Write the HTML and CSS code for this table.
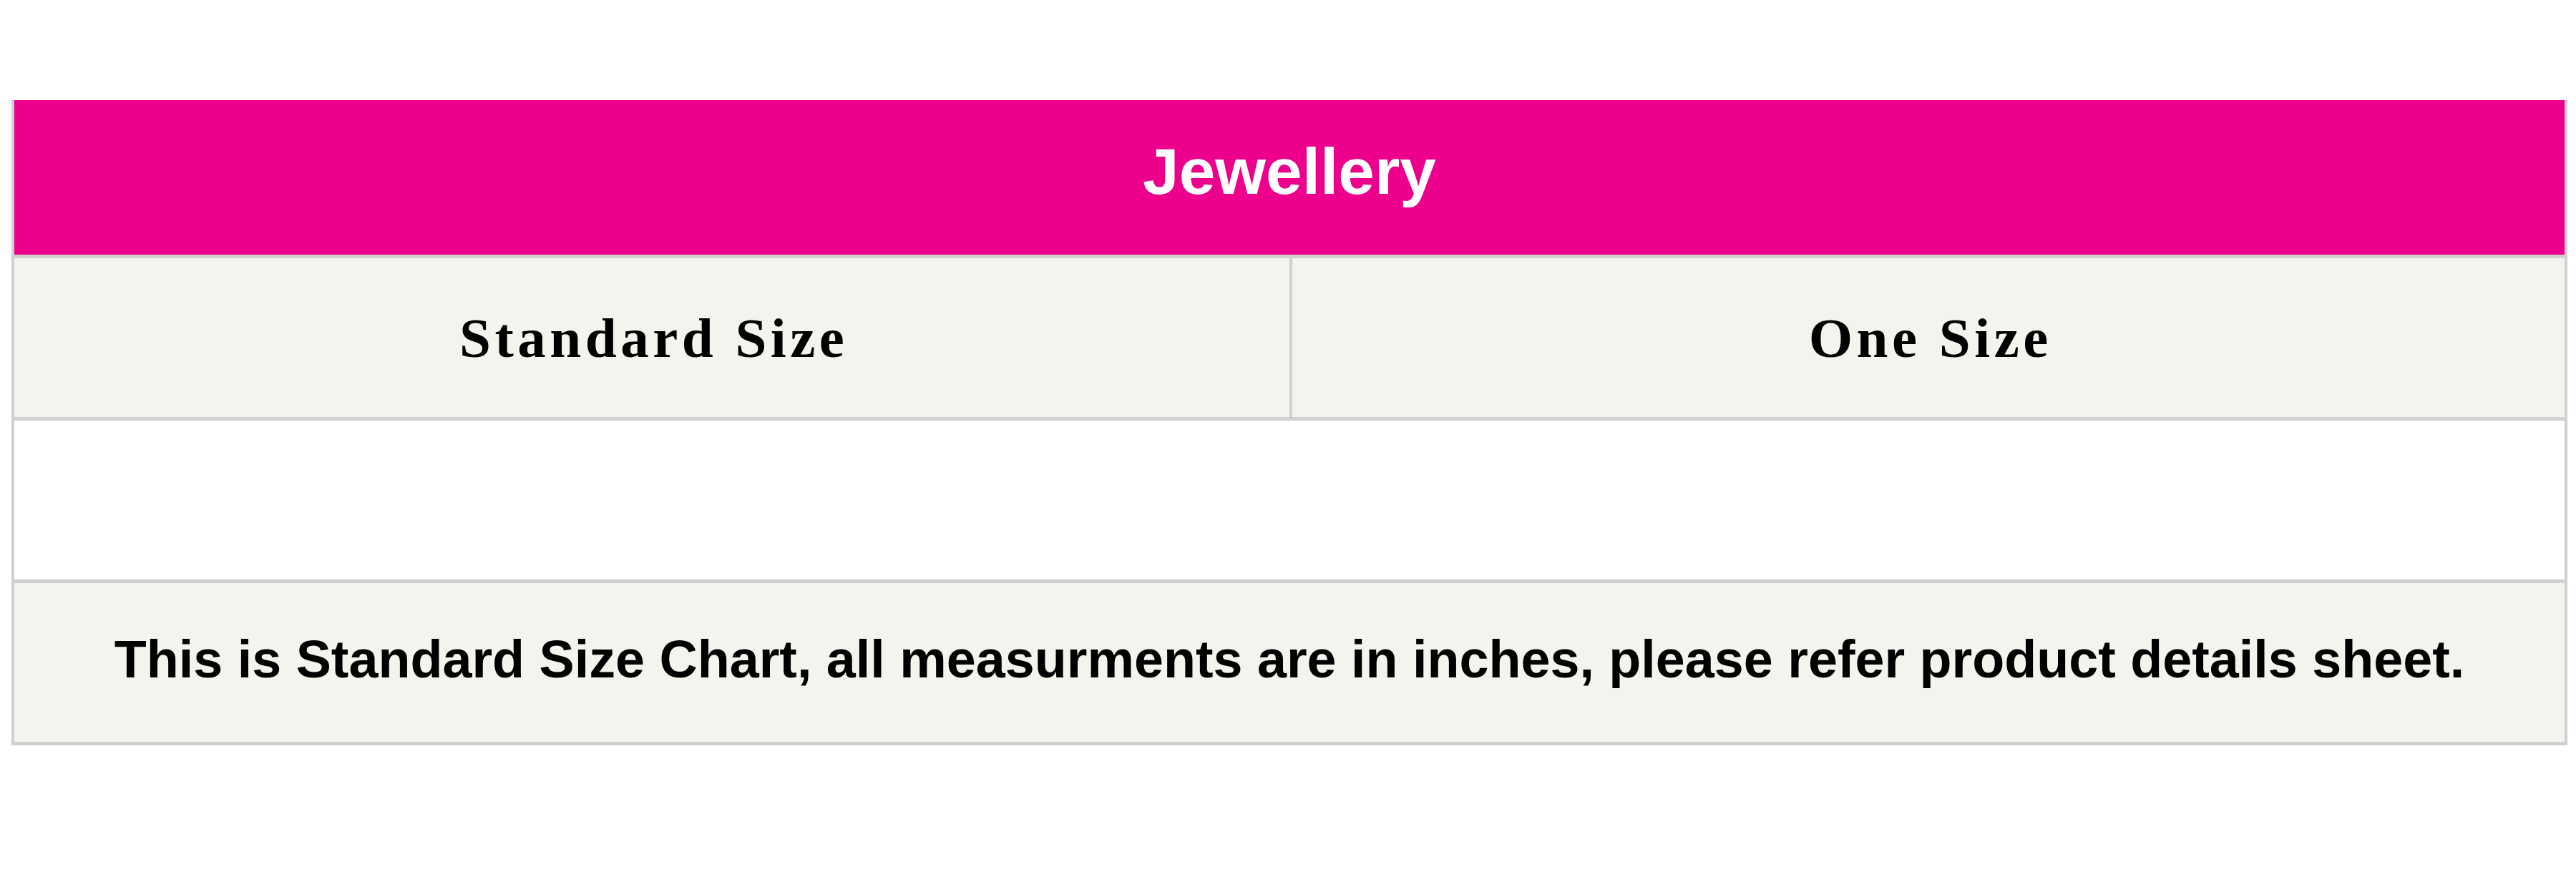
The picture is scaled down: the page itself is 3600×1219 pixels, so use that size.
FILE: index.html
```html
<!DOCTYPE html>
<html lang="en">
<head>
<meta charset="utf-8">
<title>Jewellery Size Chart</title>
<link rel="stylesheet" href="styles.css">
</head>
<body>
<div class="chart">
  <div class="title">Jewellery</div>
  <div class="heads">
    <div class="col-head">Standard Size</div>
    <div class="col-head col-right">One Size</div>
  </div>
  <div class="blank"></div>
  <div class="note">This is Standard Size Chart, all measurments are in inches, please refer product details sheet.</div>
</div>
</body>
</html>
```
FILE: styles.css
```css
html, body {
  margin: 0;
  padding: 0;
  background: #ffffff;
}

body {
  padding: 140px 0 0 16px;
}

.chart {
  box-sizing: border-box;
  width: 3572px;
  border-left: 4px solid #d0d0d0;
  border-right: 4px solid #d0d0d0;
  border-bottom: 5px solid #d0d0d0;
}

.title {
  background: #ec008c;
  color: #ffffff;
  font-family: "Liberation Sans", Arial, sans-serif;
  font-weight: bold;
  font-size: 91px;
  line-height: 91px;
  text-align: center;
  padding: 54px 0 71px;
}

.heads {
  display: grid;
  grid-template-columns: 1782px 1fr;
  border-top: 5px solid #d0d0d0;
  background: #f4f3ed;
}

.col-head {
  font-family: "Liberation Serif", "Times New Roman", serif;
  font-weight: bold;
  font-size: 79px;
  line-height: 79px;
  letter-spacing: 5.5px;
  color: #000000;
  text-align: center;
  padding: 72px 0 71px 5.5px;
}

.col-right {
  border-left: 4px solid #d0d0d0;
}

.blank {
  height: 222px;
  border-top: 5px solid #d0d0d0;
  background: #ffffff;
}

.note {
  border-top: 5px solid #d0d0d0;
  background: #f4f3ed;
  font-family: "Liberation Sans", Arial, sans-serif;
  font-weight: bold;
  font-size: 73.7px;
  line-height: 74px;
  color: #000000;
  text-align: center;
  padding: 70px 0 78px;
  white-space: nowrap;
}
```
